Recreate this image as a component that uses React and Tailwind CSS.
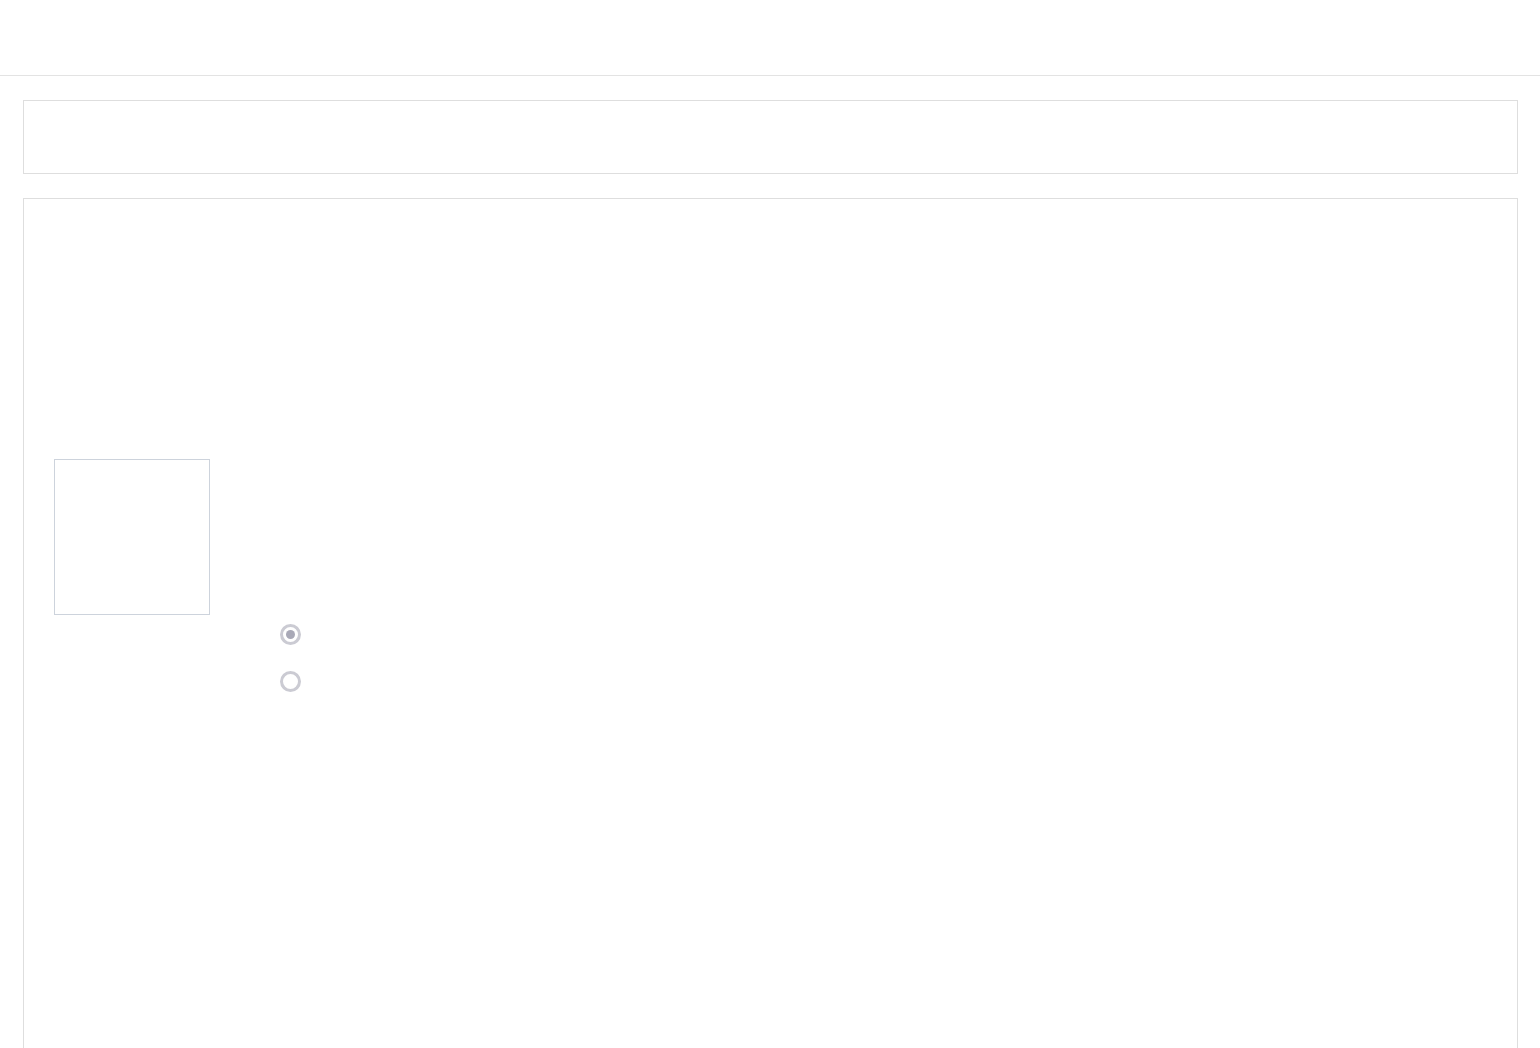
const Radio = ({ checked }) => (
  <span className="flex h-[21px] w-[21px] items-center justify-center rounded-full border-[3px] border-[#cbcbd3] bg-white">
    {checked && <span className="h-[9px] w-[9px] rounded-full bg-[#a9a9b7]" />}
  </span>
);

export default function App() {
  return (
    <div className="min-h-screen bg-white" style={{ fontFamily: "'Liberation Sans', Arial, sans-serif" }}>
      {/* Header */}
      <header className="h-[76px] border-b border-[#e3e3e3]" />

      <main className="flex flex-col gap-[24px] pl-[23px] pr-[22px] pt-[24px]">
        {/* Top panel */}
        <section className="h-[74px] border border-[#dedede]" />

        {/* Form panel */}
        <section className="h-[900px] border border-[#dedede] px-[30px] pt-[260px]">
          <div className="h-[156px] w-[156px] border border-[#cdd3dc]" />
          <div className="mt-[9px] flex flex-col gap-[26px] pl-[226px]">
            <Radio checked />
            <Radio />
          </div>
        </section>
      </main>
    </div>
  );
}
